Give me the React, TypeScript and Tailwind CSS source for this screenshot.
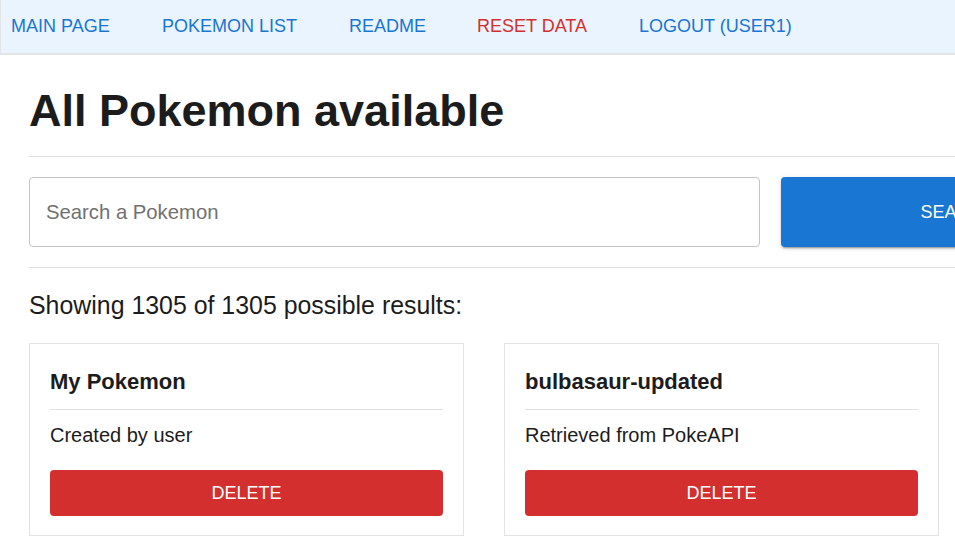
import React from "react";

const font = { fontFamily: '"Liberation Sans", Arial, sans-serif' };

function NavLink({ label, w, red }: { label: string; w: string; red?: boolean }) {
  return (
    <div className={`${w} shrink-0`}>
      <span className={`text-[18px] leading-[20px] ${red ? "text-[#d32f2f]" : "text-[#1976d2]"}`}>{label}</span>
    </div>
  );
}

function Card({ title, sub }: { title: string; sub: string }) {
  return (
    <div className="w-[435px] shrink-0 border border-[#e3e3e3] px-[20px] pt-[25px] pb-[19px] bg-white">
      <div className="text-[22px] leading-[26px] font-bold text-[#1c1c1c]">{title}</div>
      <div className="mt-[14px] h-px bg-[#e0e0e0]" />
      <div className="mt-[13px] text-[20px] leading-[24px] text-[#1c1c1c]">{sub}</div>
      <button className="mt-[23px] w-full h-[46px] rounded-[4px] bg-[#d32f2f] text-white text-[18px] flex items-center justify-center">
        DELETE
      </button>
    </div>
  );
}

export default function App() {
  return (
    <div className="w-screen h-screen overflow-hidden bg-white" style={font}>
      <nav className="h-[55px] bg-[#eaf4fe] border-b-2 border-l border-[#e2e4e6] flex items-center pl-[10px]">
        <NavLink label="MAIN PAGE" w="w-[151px]" />
        <NavLink label="POKEMON LIST" w="w-[187px]" />
        <NavLink label="README" w="w-[128px]" />
        <NavLink label="RESET DATA" w="w-[162px]" red />
        <NavLink label="LOGOUT (USER1)" w="w-[200px]" />
      </nav>
      <main className="pl-[29px] w-[1500px]">
        <h1 className="mt-[29px] text-[45px] leading-[54px] font-bold text-[#1c1c1c]">All Pokemon available</h1>
        <div className="mt-[18px] h-px bg-[#e0e0e0] w-[1106px]" />
        <div className="mt-[20px] flex gap-[21px] w-[1106px]">
          <div className="w-[731px] h-[70px] border border-[#c4c4c4] rounded-[4px] flex items-center pl-[16px]">
            <span className="text-[20.3px] text-[#717171]">Search a Pokemon</span>
          </div>
          <button className="w-[354px] h-[70px] rounded-[4px] bg-[#1976d2] text-white text-[18px] flex items-center justify-center shadow-[0_3px_1px_-2px_rgba(0,0,0,0.2),0_2px_2px_0_rgba(0,0,0,0.14),0_1px_5px_0_rgba(0,0,0,0.12)]">
            SEARCH
          </button>
        </div>
        <div className="mt-[20px] h-px bg-[#e0e0e0] w-[1106px]" />
        <p className="mt-[23px] text-[24.9px] leading-[28px] text-[#1c1c1c]">Showing 1305 of 1305 possible results:</p>
        <div className="mt-[24px] flex gap-[40px]">
          <Card title="My Pokemon" sub="Created by user" />
          <Card title="bulbasaur-updated" sub="Retrieved from PokeAPI" />
        </div>
      </main>
    </div>
  );
}
